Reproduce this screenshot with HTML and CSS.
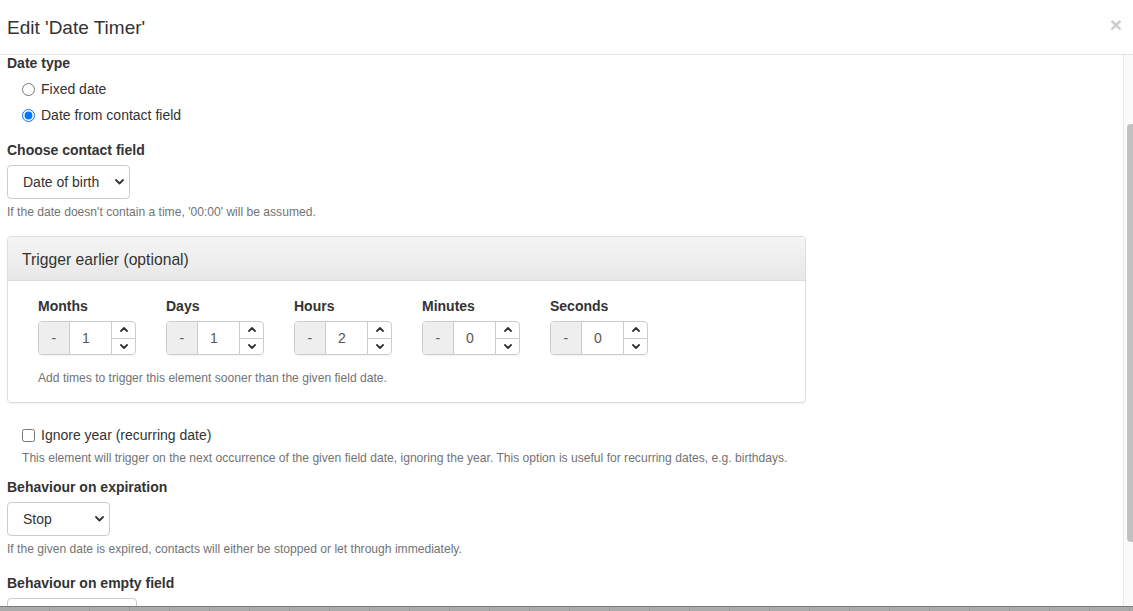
FILE: index.html
```html
<!DOCTYPE html>
<html>
<head>
<meta charset="utf-8">
<title>Edit 'Date Timer'</title>
<link rel="stylesheet" href="styles.css">
</head>
<body>
<div class="modal">
  <div class="modal-header">
    <h4 class="modal-title">Edit 'Date Timer'</h4>
    <span class="close">×</span>
  </div>
  <div class="modal-main">
    <div class="modal-body">
      <div class="scrolled">
        <div class="label l-type">Date type</div>
        <label class="radio r1"><input type="radio" name="datetype"> Fixed date</label>
        <label class="radio r2"><input type="radio" name="datetype" checked> Date from contact field</label>

        <div class="label l-contact">Choose contact field</div>
        <div class="select sel-field"><span>Date of birth</span>
          <svg class="chev" width="9" height="6" viewBox="0 0 9 6"><polyline points="1,1 4.5,4.5 8,1" fill="none" stroke="#333" stroke-width="1.8" stroke-linecap="round" stroke-linejoin="round"/></svg>
        </div>
        <div class="help h1">If the date doesn't contain a time, '00:00' will be assumed.</div>

        <div class="panel">
          <div class="panel-heading">Trigger earlier (optional)</div>
          <div class="panel-body">
            <div class="units">
              <div class="unit">
                <div class="label">Months</div>
                <div class="ig"><span class="addon">-</span><span class="val">1</span><span class="spin"><span class="up"><svg width="8" height="5" viewBox="0 0 8 5"><polyline points="1,4 4,1 7,4" fill="none" stroke="#333" stroke-width="1.8" stroke-linecap="round" stroke-linejoin="round"/></svg></span><span class="down"><svg width="8" height="5" viewBox="0 0 8 5"><polyline points="1,1 4,4 7,1" fill="none" stroke="#333" stroke-width="1.8" stroke-linecap="round" stroke-linejoin="round"/></svg></span></span></div>
              </div>
              <div class="unit">
                <div class="label">Days</div>
                <div class="ig"><span class="addon">-</span><span class="val">1</span><span class="spin"><span class="up"><svg width="8" height="5" viewBox="0 0 8 5"><polyline points="1,4 4,1 7,4" fill="none" stroke="#333" stroke-width="1.8" stroke-linecap="round" stroke-linejoin="round"/></svg></span><span class="down"><svg width="8" height="5" viewBox="0 0 8 5"><polyline points="1,1 4,4 7,1" fill="none" stroke="#333" stroke-width="1.8" stroke-linecap="round" stroke-linejoin="round"/></svg></span></span></div>
              </div>
              <div class="unit">
                <div class="label">Hours</div>
                <div class="ig"><span class="addon">-</span><span class="val">2</span><span class="spin"><span class="up"><svg width="8" height="5" viewBox="0 0 8 5"><polyline points="1,4 4,1 7,4" fill="none" stroke="#333" stroke-width="1.8" stroke-linecap="round" stroke-linejoin="round"/></svg></span><span class="down"><svg width="8" height="5" viewBox="0 0 8 5"><polyline points="1,1 4,4 7,1" fill="none" stroke="#333" stroke-width="1.8" stroke-linecap="round" stroke-linejoin="round"/></svg></span></span></div>
              </div>
              <div class="unit">
                <div class="label">Minutes</div>
                <div class="ig"><span class="addon">-</span><span class="val">0</span><span class="spin"><span class="up"><svg width="8" height="5" viewBox="0 0 8 5"><polyline points="1,4 4,1 7,4" fill="none" stroke="#333" stroke-width="1.8" stroke-linecap="round" stroke-linejoin="round"/></svg></span><span class="down"><svg width="8" height="5" viewBox="0 0 8 5"><polyline points="1,1 4,4 7,1" fill="none" stroke="#333" stroke-width="1.8" stroke-linecap="round" stroke-linejoin="round"/></svg></span></span></div>
              </div>
              <div class="unit">
                <div class="label">Seconds</div>
                <div class="ig"><span class="addon">-</span><span class="val">0</span><span class="spin"><span class="up"><svg width="8" height="5" viewBox="0 0 8 5"><polyline points="1,4 4,1 7,4" fill="none" stroke="#333" stroke-width="1.8" stroke-linecap="round" stroke-linejoin="round"/></svg></span><span class="down"><svg width="8" height="5" viewBox="0 0 8 5"><polyline points="1,1 4,4 7,1" fill="none" stroke="#333" stroke-width="1.8" stroke-linecap="round" stroke-linejoin="round"/></svg></span></span></div>
              </div>
            </div>
            <div class="help h-panel">Add times to trigger this element sooner than the given field date.</div>
          </div>
        </div>

        <label class="checkbox"><input type="checkbox"> Ignore year (recurring date)</label>
        <div class="help h-check">This element will trigger on the next occurrence of the given field date, ignoring the year. This option is useful for recurring dates, e.g. birthdays.</div>

        <div class="label l-exp">Behaviour on expiration</div>
        <div class="select sel-stop"><span>Stop</span>
          <svg class="chev" width="9" height="6" viewBox="0 0 9 6"><polyline points="1,1 4.5,4.5 8,1" fill="none" stroke="#333" stroke-width="1.8" stroke-linecap="round" stroke-linejoin="round"/></svg>
        </div>
        <div class="help h-exp">If the given date is expired, contacts will either be stopped or let through immediately.</div>

        <div class="label l-empty">Behaviour on empty field</div>
        <div class="select sel-empty"><span>&nbsp;</span></div>
      </div>
    </div>
    <div class="scrollbar"><div class="thumb"></div></div>
  </div>
  <div class="backdrop-strip"></div>
</div>
</body>
</html>
```

FILE: styles.css
```css
* { box-sizing: border-box; }
html, body { margin: 0; padding: 0; }
body {
  font-family: "Liberation Sans", Arial, sans-serif;
  font-size: 14px;
  color: #333;
  background: #fff;
  width: 1133px;
  height: 611px;
  overflow: hidden;
}
.modal {
  display: flex;
  flex-direction: column;
  height: 611px;
}
.modal-header {
  height: 55px;
  border-bottom: 1px solid #e5e5e5;
  display: flex;
  align-items: flex-start;
  justify-content: space-between;
  padding: 0 11px 0 7px;
  flex: none;
}
.modal-title {
  margin: 17px 0 0 0;
  font-size: 19px;
  font-weight: normal;
  line-height: 22px;
  color: #333;
}
.close {
  margin-top: 13px;
  font-size: 21px;
  font-weight: bold;
  line-height: 24px;
  color: #000;
  opacity: 0.2;
}
.modal-main {
  flex: 1;
  display: flex;
  min-height: 0;
}
.modal-body {
  flex: 1;
  overflow: hidden;
  padding-left: 7px;
}
.scrolled {
  margin-top: -2px;
}
.scrollbar {
  width: 10px;
  flex: none;
  border-left: 1px solid #e8e8e8;
  background: #fafafa;
  padding-top: 69px;
  padding-left: 3px;
}
.thumb {
  height: 418px;
  background: #c1c1c1;
  border-radius: 4px 0 0 4px;
}
.backdrop-strip {
  flex: none;
  height: 5px;
  border-top: 1px solid #7d7d7d;
  background:
    repeating-linear-gradient(to right, #ababab 0, #ababab 39px, #9c9c9c 39px, #9c9c9c 40px) 10px 0 / auto,
    #ababab;
}

.label {
  font-weight: bold;
  line-height: 20px;
  margin-bottom: 5px;
}
.l-type { margin-bottom: 6px; }
.radio, .checkbox {
  display: flex;
  align-items: center;
  line-height: 20px;
  padding-left: 15px;
}
.radio input, .checkbox input {
  margin: 0 6px 0 0;
  width: 13px;
  height: 13px;
}
.r1 { margin-bottom: 6px; }
.l-contact { margin-top: 15px; margin-bottom: 5px; }
.select {
  display: flex;
  align-items: center;
  justify-content: space-between;
  height: 34px;
  border: 1px solid #ccc;
  border-radius: 4px;
  padding: 0 5px 0 15px;
  background: #fff;
}
.sel-field { width: 123px; }
.sel-stop { width: 103px; }
.sel-empty { width: 130px; }
.help {
  font-size: 12.1px;
  line-height: 17px;
  color: #737373;
}
.h1 { margin-top: 5px; }

.panel {
  margin-top: 15px;
  width: 799px;
  border: 1px solid #ddd;
  border-radius: 4px;
  box-shadow: 0 1px 1px rgba(0,0,0,.05);
}
.panel-heading {
  height: 44px;
  border-bottom: 1px solid #ddd;
  border-radius: 3px 3px 0 0;
  background: linear-gradient(to bottom, #f5f5f5 0, #e8e8e8 100%);
  font-size: 15.7px;
  line-height: 43px;
  padding: 1px 0 0 14px;
  color: #333;
}
.panel-body {
  padding: 15px 30px 15px 30px;
}
.units { display: flex; }
.unit { width: 128px; }
.ig {
  display: flex;
  width: 98px;
  height: 34px;
  border: 1px solid #ccc;
  border-radius: 4px;
  overflow: hidden;
  box-shadow: 0 1px 1px rgba(0,0,0,.05);
}
.addon {
  width: 31px;
  background: #eee;
  border-right: 1px solid #ccc;
  display: flex;
  align-items: center;
  justify-content: center;
  color: #555;
}
.val {
  width: 42px;
  display: flex;
  align-items: center;
  justify-content: center;
  padding-right: 9px;
  color: #555;
}
.spin {
  width: 24px;
  border-left: 1px solid #ccc;
  display: flex;
  flex-direction: column;
}
.spin .up, .spin .down {
  flex: 1;
  display: flex;
  align-items: center;
  justify-content: center;
}
.spin .up { border-bottom: 1px solid #ccc; }
.h-panel { margin-top: 15px; }

.checkbox { margin-top: 22px; }
.h-check { margin-top: 5px; padding-left: 15px; }
.l-exp { margin-top: 10px; margin-bottom: 5px; }
.h-exp { margin-top: 5px; }
.l-empty { margin-top: 15px; }
.sel-empty { margin-top: 0; }
```
